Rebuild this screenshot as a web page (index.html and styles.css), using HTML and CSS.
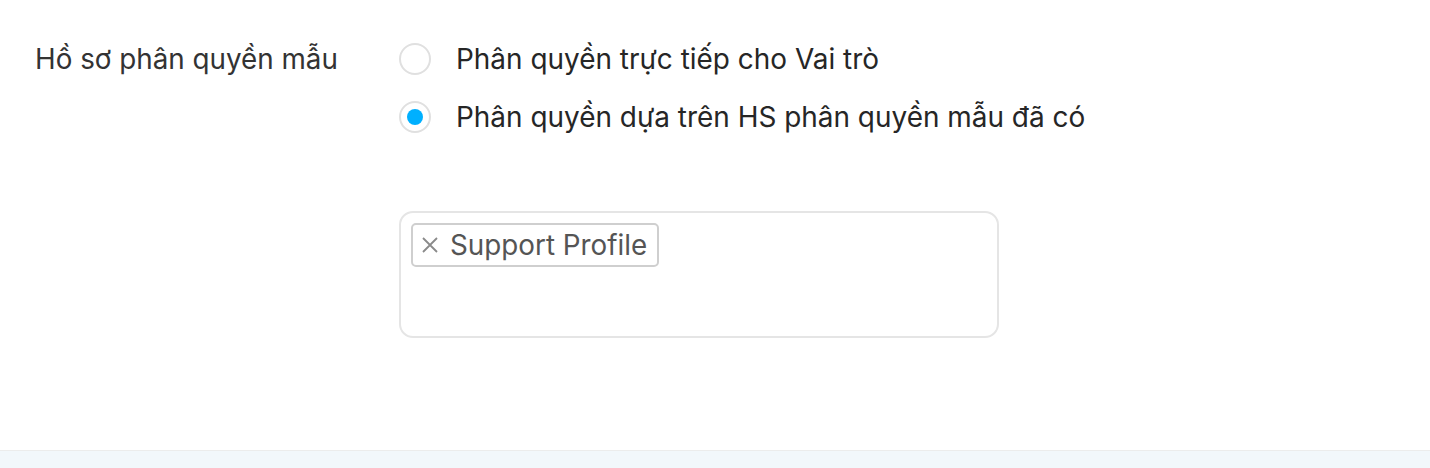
FILE: index.html
```html
<!DOCTYPE html>
<html lang="vi">
<head>
    <meta charset="UTF-8">
    <title>Hồ sơ phân quyền mẫu</title>
    <link rel="stylesheet" href="styles.css">
</head>
<body>

<div class="panel">
    <div class="form-row">
        <div class="row-label">Hồ sơ phân quyền mẫu</div>

        <div class="row-field">
            <label class="radio-option">
                <span class="radio"></span>
                <span class="radio-text">Phân quyền trực tiếp cho Vai trò</span>
            </label>
            <label class="radio-option">
                <span class="radio checked"></span>
                <span class="radio-text">Phân quyền dựa trên HS phân quyền mẫu đã có</span>
            </label>

            <!-- hồ sơ đã chọn -->
            <div class="tag-box">
                <span class="tag">
                    <svg class="tag-remove" width="18" height="18" viewBox="0 0 18 18">
                        <path d="M2 2 L16 16 M16 2 L2 16" stroke="#8a8a8a" stroke-width="1.8" fill="none"/>
                    </svg>Support Profile</span>
            </div>
        </div>
    </div>
</div>

<footer class="bottom-bar"></footer>

</body>
</html>
```

FILE: styles.css
```css
body {
    font-family: Inter, "Noto Sans", Arial, sans-serif;
    background-color: #fff;
    color: #2b2b2b;
    margin: 0;
    padding: 0;
}
.panel {
    height: 450px;
    box-sizing: border-box;
    padding: 39px 35px 0;
}
.form-row {
    display: grid;
    grid-template-columns: 364px 1fr;
}
.row-label {
    font-size: 27.8px;
    line-height: 40px;
    color: #333;
}
.row-field {
    display: flex;
    flex-direction: column;
}
.radio-option {
    display: flex;
    align-items: center;
    gap: 25px;
    height: 40px;
    margin-bottom: 18px;
    cursor: pointer;
}
.radio {
    width: 32px;
    height: 32px;
    box-sizing: border-box;
    border: 2px solid #e0e0e0;
    border-radius: 50%;
    display: flex;
    align-items: center;
    justify-content: center;
}
.radio.checked::after {
    content: "";
    width: 16px;
    height: 16px;
    border-radius: 50%;
    background-color: #00b0ff;
}
.radio-text {
    font-size: 27.95px;
    color: #262626;
}
.tag-box {
    width: 600px;
    height: 127px;
    box-sizing: border-box;
    margin-top: 56px;
    padding: 10px;
    border: 2px solid #e5e5e5;
    border-radius: 14px;
    display: flex;
    align-items: flex-start;
}
.tag {
    display: inline-flex;
    align-items: center;
    height: 44px;
    box-sizing: border-box;
    padding: 0 10px 0 8px;
    border: 2px solid #cfcfcf;
    border-radius: 5px;
    font-size: 27.8px;
    color: #555;
}
.tag-remove {
    margin-right: 11px;
}
.bottom-bar {
    height: 18px;
    border-top: 1px solid #ececec;
    background-color: #f2f7fb;
}
```
